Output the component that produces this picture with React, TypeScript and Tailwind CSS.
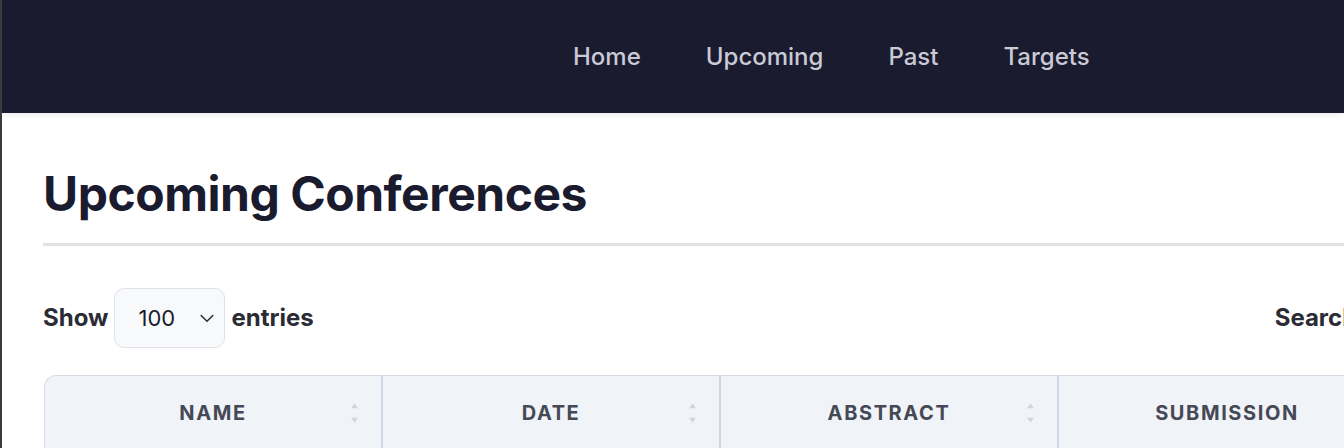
import React from "react";

function SortIcon() {
  return (
    <div className="flex flex-col items-center gap-[9px]">
      <svg width="7" height="5" viewBox="0 0 7 5">
        <path d="M3.5 0 L7 5 L0 5 Z" fill="#cfd3da" />
      </svg>
      <svg width="7" height="5" viewBox="0 0 7 5">
        <path d="M0 0 L7 0 L3.5 5 Z" fill="#cfd3da" />
      </svg>
    </div>
  );
}

function HeaderCell({ label, sortable, first }: { label: string; sortable?: boolean; first?: boolean }) {
  return (
    <div
      className={
        "relative flex h-[74px] shrink-0 items-center justify-center " +
        (first ? "w-[336px]" : "w-[338px] border-l-[2px] border-[#cdd6e6]")
      }
    >
      <span className="text-[20px] font-bold uppercase tracking-[0.08em] text-[#454955]">{label}</span>
      {sortable && (
        <div className="absolute right-[23px] top-1/2 -translate-y-1/2">
          <SortIcon />
        </div>
      )}
    </div>
  );
}

export default function App() {
  return (
    <div
      className="h-[448px] w-[1344px] overflow-hidden border-l-[2px] border-[#3b3b3f] bg-white"
      style={{ fontFamily: "Inter, 'Noto Sans', sans-serif" }}
    >
      <nav className="relative z-10 flex h-[113px] items-center gap-[65px] bg-[#1a1b2e] pl-[571px] shadow-[0_2px_6px_rgba(0,0,0,0.08)]">
        {["Home", "Upcoming", "Past", "Targets"].map((t) => (
          <a key={t} className="text-[24px] font-medium text-[#c9cad6]">
            {t}
          </a>
        ))}
      </nav>
      <main className="w-[1600px] pl-[41px] pt-[57px]">
        <h1 className="text-[48px] font-bold leading-none tracking-[-0.01em] text-[#1a1b2e]">
          Upcoming Conferences
        </h1>
        <div className="mt-[25px] h-[3px] w-full bg-[#e0e2e6]" />
        <div className="mt-[42px] flex h-[60px] items-center">
          <span className="text-[24px] font-bold text-[#2a2b35]">Show</span>
          <div className="ml-[6px] flex h-[60px] w-[111px] items-center justify-between rounded-[10px] border border-[#dfe2e8] bg-[#f8f9fb] pl-[23px] pr-[7px]">
            <span className="text-[22px] text-[#1a1b2e]">100</span>
            <svg width="20" height="20" viewBox="0 0 24 24" fill="none" stroke="#2a2b35" strokeWidth="1.8" strokeLinecap="round" strokeLinejoin="round">
              <path d="M5 9l7 7 7-7" />
            </svg>
          </div>
          <span className="ml-[6px] text-[24px] font-bold text-[#2a2b35]">entries</span>
          <div className="ml-[961px] flex items-center gap-2">
            <span className="text-[24px] font-bold text-[#2a2b35]">Search:</span>
            <div className="h-[60px] w-[220px] rounded-[10px] border border-[#dfe2e8] bg-[#f8f9fb]" />
          </div>
        </div>
        <div className="ml-[1px] mt-[27px] flex w-[1500px] overflow-hidden rounded-tl-[12px] border-l border-t border-[#d6dce6] bg-[#f0f3f8]">
          <HeaderCell label="Name" sortable first />
          <HeaderCell label="Date" sortable />
          <HeaderCell label="Abstract" sortable />
          <HeaderCell label="Submission" sortable />
        </div>
      </main>
    </div>
  );
}
